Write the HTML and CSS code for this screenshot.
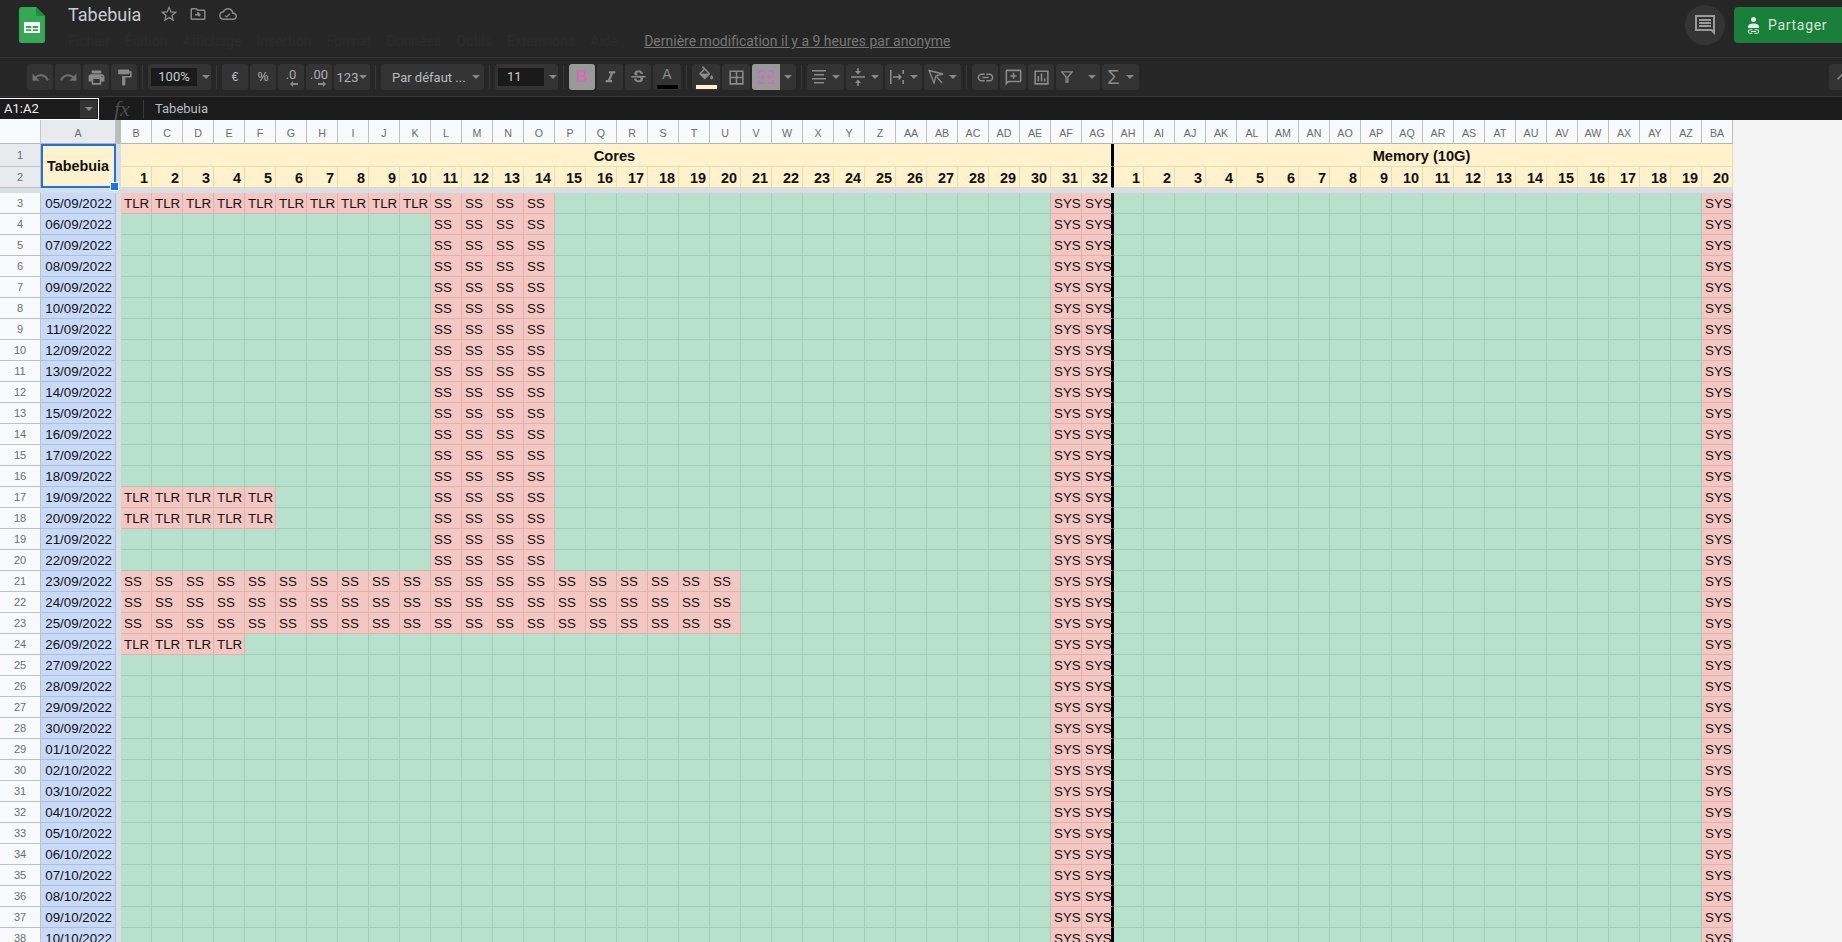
FILE: index.html
```html
<!DOCTYPE html>
<html lang="fr">
<head>
<meta charset="utf-8">
<title>Tabebuia</title>
<link rel="stylesheet" href="styles.css">
</head>
<body>
<header class="appbar">
  <svg class="logo" viewBox="0 0 26 36"><path fill="#34a853" d="M2.500 0H17l9 9v24.500a2.500 2.500 0 0 1-2.500 2.500h-21A2.500 2.500 0 0 1 0 33.500v-31A2.500 2.500 0 0 1 2.500 0z"/><path fill="#228c44" d="M17 0l9 9h-7a2 2 0 0 1-2-2z"/><path fill="#fff" d="M5 15h16v11H5z"/><path fill="#34a853" d="M7 19h5.300v2H7zM13.700 19H19v2h-5.300zM7 22.200h5.300V24H7zM13.700 22.200H19V24h-5.300z"/></svg>
  <div class="docinfo">
    <div class="titlerow">
      <span class="title">Tabebuia</span>
      <svg class="ticon star" viewBox="0 0 24 24"><path d="M22 9.240l-7.190-.62L12 2 9.190 8.630 2 9.240l5.460 4.730L5.820 21 12 17.270 18.180 21l-1.630-7.030L22 9.240zM12 15.400l-3.760 2.270 1-4.280-3.320-2.880 4.380-.38L12 6.100l1.710 4.040 4.380.38-3.320 2.880 1 4.280L12 15.400z"/></svg>
      <svg class="ticon folder" viewBox="0 0 24 24"><path d="M20 6h-8l-2-2H4c-1.100 0-2 .9-2 2v12c0 1.100.9 2 2 2h16c1.100 0 2-.9 2-2V8c0-1.100-.9-2-2-2zm0 12H4V6h5.170l2 2H20v10zm-8-1l1.400-1.400-1.600-1.600H8v-2h3.800l-1.600-1.600L12 9l4 4-4 4z"/></svg>
      <svg class="ticon cloud" viewBox="0 0 24 24"><path d="M19.350 10.040C18.670 6.590 15.640 4 12 4 9.110 4 6.600 5.640 5.350 8.040 2.340 8.360 0 10.910 0 14c0 3.310 2.690 6 6 6h13c2.760 0 5-2.240 5-5 0-2.640-2.050-4.780-4.650-4.960zM19 18H6c-2.210 0-4-1.790-4-4s1.790-4 4-4h.71C7.370 7.690 9.480 6 12 6c3.040 0 5.500 2.460 5.500 5.500v.5H19c1.660 0 3 1.340 3 3s-1.340 3-3 3zm-9.500-3l5-4 1 1-5 5-3-2.500 1-1z"/></svg>
    </div>
    <nav class="menurow">
      <span>Fichier</span><span>Édition</span><span>Affichage</span><span>Insertion</span><span>Format</span><span>Données</span><span>Outils</span><span>Extensions</span><span>Aide</span>
      <a class="lastedit">Dernière modification il y a 9 heures par anonyme</a>
    </nav>
  </div>
  <div class="commentbtn">
    <svg viewBox="0 0 20 20"><path fill-rule="evenodd" d="M0 0h20v20l-4-4H0zM2 2v12h15l1 1V2zM4 4h12v2H4zM4 7h12v2H4zM4 10h12v2H4z"/></svg>
  </div>
  <div class="sharebtn">
    <svg viewBox="0 0 13 17"><circle cx="6.500" cy="2.500" r="2.500"/><path d="M1 9.500C1 7.800 3.500 6.500 6.500 6.500S12 7.800 12 9.500V11H1z"/><path d="M3 12.300h2.500v1H3a1.200 1.200 0 0 0 0 2.400h2.500v1H3a2.200 2.200 0 0 1 0-4.400zM7.500 12.300H10a2.200 2.200 0 0 1 0 4.400H7.500v-1H10a1.200 1.200 0 0 0 0-2.400H7.500zM4 14h5v1H4z"/></svg>
    <span>Partager</span>
  </div>
</header>

<div class="toolbar">
  <div class="btn dim"><svg class="ic" viewBox="0 0 24 24"><path d="M12.500 8c-2.650 0-5.050.99-6.900 2.600L2 7v9h9l-3.620-3.620c1.390-1.160 3.160-1.880 5.120-1.880 3.540 0 6.550 2.310 7.600 5.500l2.370-.78C21.080 11.030 17.150 8 12.500 8z"/></svg></div>
  <div class="btn dim"><svg class="ic" viewBox="0 0 24 24"><path d="M18.400 10.600C16.550 8.990 14.150 8 11.500 8c-4.650 0-8.580 3.030-9.960 7.220L3.900 16c1.050-3.190 4.050-5.500 7.600-5.500 1.950 0 3.730.72 5.120 1.880L13 16h9V7l-3.600 3.600z"/></svg></div>
  <div class="btn"><svg class="ic" viewBox="0 0 24 24"><path d="M19 8H5c-1.660 0-3 1.340-3 3v6h4v4h12v-4h4v-6c0-1.660-1.340-3-3-3zm-3 11H8v-5h8v5zm3-7c-.55 0-1-.45-1-1s.45-1 1-1 1 .45 1 1-.45 1-1 1zm-1-9H6v4h12V3z"/></svg></div>
  <div class="btn"><svg class="ic" viewBox="0 0 24 24"><path d="M18 4V3c0-.55-.45-1-1-1H5c-.55 0-1 .45-1 1v4c0 .55.45 1 1 1h12c.55 0 1-.45 1-1V6h1v4H9v11c0 .55.45 1 1 1h2c.55 0 1-.45 1-1v-9h8V4h-3z"/></svg></div>
  <i class="sep"></i>
  <div class="btn w63"><span class="inbox zoomval">100%</span><i class="caret"></i></div>
  <i class="sep"></i>
  <div class="btn txt">€</div>
  <div class="btn txt">%</div>
  <div class="btn dec"><span>.0</span><svg viewBox="0 0 8 6"><path d="M3 0v2h5v2H3v2L0 3z"/></svg></div>
  <div class="btn dec"><span>.00</span><svg viewBox="0 0 8 6"><path d="M5 0v2H0v2h5v2l3-3z"/></svg></div>
  <div class="btn w36 num"><span>123</span><i class="caret"></i></div>
  <i class="sep"></i>
  <div class="btn w103 fontbtn"><span class="fontname">Par défaut ...</span><i class="caret"></i></div>
  <i class="sep"></i>
  <div class="btn w63"><span class="inbox sizeval">11</span><i class="caret"></i></div>
  <i class="sep"></i>
  <div class="btn on bold">B</div>
  <div class="btn"><svg class="ic" viewBox="0 0 24 24"><path d="M10 4v3h2.210l-3.420 8H6v3h8v-3h-2.210l3.420-8H18V4z"/></svg></div>
  <div class="btn"><svg class="ic" viewBox="0 0 24 24"><path d="M7.240 8.750c-.26-.48-.39-1.030-.39-1.670 0-.61.13-1.160.4-1.670.26-.5.63-.93 1.110-1.290.48-.35 1.050-.63 1.700-.83.66-.19 1.390-.29 2.180-.29.81 0 1.540.11 2.210.34.66.22 1.230.54 1.690.94.47.4.83.88 1.080 1.430.25.55.38 1.150.38 1.810h-3.010c0-.31-.05-.59-.15-.85-.09-.27-.24-.49-.44-.68-.2-.19-.45-.33-.75-.44-.3-.1-.66-.16-1.060-.16-.39 0-.74.04-1.030.13-.29.09-.53.21-.72.36-.19.16-.34.34-.44.55-.1.21-.15.43-.15.66 0 .48.25.88.74 1.210.38.25.77.48 1.410.7H7.390c-.05-.08-.11-.17-.15-.25zM21 12v-2H3v2h9.620c.18.07.4.14.55.2.37.17.66.34.87.51.21.17.35.36.43.57.07.2.11.43.11.69 0 .23-.05.45-.14.66-.09.2-.23.38-.42.53-.19.15-.42.26-.71.35-.29.08-.63.13-1.010.13-.43 0-.83-.04-1.180-.13s-.66-.23-.91-.42c-.25-.19-.45-.44-.59-.75-.14-.31-.25-.76-.25-1.210H6.400c0 .55.08 1.130.24 1.580.16.45.37.85.65 1.210.28.35.6.66.98.92.37.26.78.48 1.220.65.44.17.9.3 1.380.39.48.08.96.13 1.440.13.8 0 1.530-.09 2.180-.28s1.210-.45 1.670-.79c.46-.34.82-.77 1.070-1.270s.38-1.070.38-1.710c0-.6-.1-1.140-.31-1.610-.05-.11-.11-.23-.17-.33H21z"/></svg></div>
  <div class="btn w28 colorbtn"><span class="letter">A</span><i class="swatch black"></i></div>
  <i class="sep"></i>
  <div class="btn w28 colorbtn"><svg class="bucket" viewBox="0 0 22 18"><path d="M16.560 8.940L7.620 0 6.210 1.410l2.380 2.380-5.150 5.150c-.59.59-.59 1.540 0 2.120l5.500 5.500c.29.29.68.44 1.060.44s.77-.15 1.060-.44l5.500-5.500c.59-.58.59-1.530 0-2.120zM5.210 10L10 5.210 14.790 10H5.210zM19 11.500s-2 2.170-2 3.500c0 1.100.9 2 2 2s2-.9 2-2c0-1.330-2-3.500-2-3.500z"/><path d="M5 10h10l-5 5z"/></svg><i class="swatch cream"></i></div>
  <div class="btn w28"><svg class="ic borders" viewBox="0 0 24 24"><path d="M3 3v18h18V3H3zm8 16H5v-6h6v6zm0-8H5V5h6v6zm8 8h-6v-6h6v6zm0-8h-6V5h6v6z"/></svg></div>
  <div class="btn mergegroup"><span class="mergeon"><svg viewBox="0 0 16 14"><path fill="none" stroke="#cf6db9" stroke-width="1.500" d="M.8 4V.8h5M10 .8h5.200V4M.8 10v3.200h5M10 13.200h5.200V10M0 7h6M10 7h6M4 5l2 2-2 2M12 5l-2 2 2 2"/></svg></span><i class="caret"></i></div>
  <i class="sep"></i>
  <div class="btn w37"><svg class="mini" viewBox="0 0 14 14"><path d="M0 0h14v1.600H0zM2 4h10v1.600H2zM0 8h14v1.600H0zM2 12h10v1.600H2z"/></svg><i class="caret"></i></div>
  <div class="btn w37"><svg class="mini tall" viewBox="0 0 14 18"><path d="M0 8.200h14v1.600H0zM6.200 0h1.600v3H10L7 6.500 4 3h2.200zM7 11.500l3 3.500H7.800v3H6.200v-3H4z"/></svg><i class="caret"></i></div>
  <div class="btn w37"><svg class="mini" viewBox="0 0 14 14"><path d="M0 0h1.600v14H0zM12.400 0H14v4h-1.600zM12.400 10H14v4h-1.600zM3 6.200h5.500V3.500L12 7l-3.500 3.500V7.800H3z"/></svg><i class="caret"></i></div>
  <div class="btn w37"><svg class="mini wide" viewBox="0 0 16 16"><path fill="none" stroke="currentColor" stroke-width="1.300" d="M1 1.500l14 3.500-7 1.800-2 7.200zM9 8l5 6"/></svg><i class="caret"></i></div>
  <i class="sep"></i>
  <div class="btn"><svg class="ic" viewBox="0 0 24 24"><path d="M3.900 12c0-1.710 1.390-3.100 3.100-3.100h4V7H7c-2.760 0-5 2.240-5 5s2.240 5 5 5h4v-1.900H7c-1.710 0-3.100-1.390-3.100-3.100zM8 13h8v-2H8v2zm9-6h-4v1.900h4c1.710 0 3.100 1.390 3.100 3.100s-1.390 3.100-3.100 3.100h-4V17h4c2.760 0 5-2.240 5-5s-2.240-5-5-5z"/></svg></div>
  <div class="btn"><svg class="ic" viewBox="0 0 24 24"><path d="M20 2H4c-1.100 0-2 .9-2 2v18l4-4h14c1.100 0 2-.9 2-2V4c0-1.100-.9-2-2-2zm0 14H5.170L4 17.170V4h16v12zM11 14h2v-3h3V9h-3V6h-2v3H8v2h3z"/></svg></div>
  <div class="btn"><svg class="ic" viewBox="0 0 24 24"><path d="M3 3v18h18V3H3zm16 16H5V5h14v14zM9 17H7v-7h2zm4 0h-2V7h2zm4 0h-2v-4h2z"/></svg></div>
  <div class="btn w44"><svg class="mini funnel" viewBox="0 0 14 14"><path fill="none" stroke="currentColor" stroke-width="1.600" d="M1 1h12L8 7v6H6V7z"/></svg><i class="caret"></i></div>
  <div class="btn w37"><span class="sigma">Σ</span><i class="caret"></i></div>
  <div class="btn collapse"><svg viewBox="0 0 24 24"><path d="M12 8l-6 6 1.400 1.400L12 10.800l4.600 4.600L18 14z"/></svg></div>
</div>

<div class="formulabar">
  <div class="namebox"><span>A1:A2</span><div class="namearrow"><i class="caret"></i></div></div>
  <span class="fx">fx</span>
  <i class="fxsep"></i>
  <span class="fxvalue">Tabebuia</span>
</div>

<main class="sheet" id="sheet"></main>
<script src="script.js"></script>
</body>
</html>
```
FILE: styles.css
```css
* { box-sizing: border-box; }
html, body { margin: 0; height: 100%; overflow: hidden; }
body {
  display: flex;
  flex-direction: column;
  background: #f3f3f3;
  font-family: Roboto, "Liberation Sans", sans-serif;
}

/* App bar */
.appbar {
  flex: 0 0 58px;
  display: flex;
  align-items: flex-start;
  background: #262626;
  border-bottom: 1px solid #353535;
  overflow: hidden;
}
.logo { width: 26px; height: 36px; margin: 7px 23px 0 19px; flex: none; }
.docinfo { flex: 1; min-width: 0; }
.titlerow { display: flex; align-items: center; height: 28px; }
.title { font-size: 18px; color: #c9ccd0; width: 91px; }
.ticon { width: 17px; height: 17px; fill: #8a8a8a; margin-right: 13px; flex: none; }
.star { width: 20px; height: 20px; margin-right: 10px; }
.folder { width: 18px; height: 18px; margin-right: 12px; }
.cloud { width: 18px; height: 18px; }
.menurow {
  display: flex;
  align-items: center;
  gap: 15px;
  height: 26px;
  font-size: 14px;
  color: #2b2b2b;
  white-space: nowrap;
}
.lastedit { color: #777; text-decoration: underline; margin-left: 11px; }
.commentbtn {
  width: 40px;
  height: 40px;
  margin: 5px 9px 0 0;
  border-radius: 50%;
  background: #343434;
  display: flex;
  align-items: center;
  justify-content: center;
  flex: none;
}
.commentbtn svg { width: 20px; height: 20px; fill: #999; }
.sharebtn {
  flex: none;
  width: 120px;
  height: 36px;
  margin: 7px -12px 0 0;
  padding-left: 13px;
  border-radius: 4px;
  background: #1a8039;
  color: #d4e6d9;
  display: flex;
  align-items: center;
  gap: 8px;
  font-size: 14px;
  font-weight: 400;
  letter-spacing: .7px;
}
.sharebtn svg { width: 13px; height: 17px; fill: #e4efe7; }

/* Toolbar */
.toolbar {
  flex: 0 0 39px;
  display: flex;
  align-items: center;
  gap: 2px;
  padding: 0 0 0 27px;
  background: #262626;
  border-bottom: 1px solid #353535;
  overflow: hidden;
}
.sep { width: 1px; height: 24px; margin: 0 3px; background: #383838; flex: none; }
.btn {
  flex: none;
  width: 26px;
  height: 26px;
  border-radius: 3px;
  background: #333;
  color: #8a8a8a;
  fill: #8a8a8a;
  display: flex;
  align-items: center;
  justify-content: center;
  position: relative;
  font-size: 13px;
}
.ic { width: 19px; height: 19px; }
.borders { width: 19px; height: 19px; }
.dim { fill: #707070; }
.w28 { width: 28px; }
.w36 { width: 36px; }
.w37 { width: 37px; }
.w44 { width: 44px; }
.w63 { width: 63px; }
.w103 { width: 103px; }
.caret {
  display: block;
  width: 0;
  height: 0;
  border: 4px solid transparent;
  border-top: 4px solid #888;
  border-bottom: 0;
  flex: none;
}
.inbox {
  display: block;
  width: 46px;
  height: 18px;
  line-height: 18px;
  background: #1a1a1a;
  font-size: 13px;
  color: #c9ccd0;
  text-align: center;
  margin: 0 5px 0 2px;
}
.sizeval { text-align: left; padding-left: 9px; }
.txt { font-size: 12px; color: #b8bcc0; font-family: "Liberation Sans", sans-serif; }
.dec {
  display: block;
  color: #8a8a8a;
  font-size: 13px;
  line-height: 14px;
  padding-top: 4px;
  text-align: center;
}
.dec span { display: block; color: #a9adb1; }
.dec svg { position: absolute; width: 8px; height: 6px; right: 6px; bottom: 3px; }
.num span { color: #b0b4b8; margin-right: 1px; font-size: 13px; }
.fontbtn { justify-content: space-between; padding: 0 4px 0 11px; }
.fontname { color: #b8bcc0; font-size: 13px; white-space: nowrap; }
.on { background: #999; }
.bold { color: #cf6db9; font-family: "Liberation Sans", sans-serif; font-weight: 700; font-size: 17px; }
.colorbtn { display: block; text-align: center; }
.letter {
  display: block;
  font-family: "Liberation Sans", sans-serif;
  font-size: 14px;
  line-height: 20px;
  color: #8a8a8a;
}
.swatch { position: absolute; left: 4px; right: 3px; bottom: 1px; height: 4px; display: block; }
.black { background: #000; }
.cream { background: #fff2cc; }
.bucket { display: block; width: 17px; height: 14px; margin: 2px 0 0 5px; }
.mergegroup { width: 44px; justify-content: flex-start; }
.mergeon {
  width: 28px;
  height: 26px;
  background: #999;
  border-radius: 3px 0 0 3px;
  display: flex;
  align-items: center;
  justify-content: center;
  margin-right: 4px;
}
.mergeon svg { width: 16px; height: 14px; }
.mini { width: 14px; height: 14px; margin-right: 6px; color: #8a8a8a; flex: none; }
.tall { height: 18px; }
.wide { width: 16px; height: 16px; margin-right: 5px; }
.funnel { width: 12px; height: 12px; margin-right: 15px; }
.sigma { font-size: 20px; color: #8a8a8a; margin-right: 6px; line-height: 20px; font-family: "Liberation Sans", sans-serif; }
.collapse { margin-left: auto; margin-right: -13px; justify-content: flex-start; }
.collapse svg { width: 20px; height: 20px; margin-left: 3px; }

/* Formula bar */
.formulabar {
  flex: 0 0 23px;
  display: flex;
  align-items: center;
  background: #1b1b1b;
  color: #b8bcc0;
  font-size: 13px;
}
.namebox {
  width: 100px;
  height: 22px;
  margin-left: -1px;
  border: 1px solid #fff;
  display: flex;
  align-items: center;
  justify-content: space-between;
  padding-left: 4px;
  color: #eee;
  background: #1b1b1b;
  flex: none;
}
.namearrow {
  width: 17px;
  height: 18px;
  margin-right: 1px;
  background: #333;
  display: flex;
  align-items: center;
  justify-content: center;
}
.fx {
  font-family: "Liberation Serif", serif;
  font-style: italic;
  font-size: 22px;
  color: #4d4d4d;
  width: 29px;
  margin-left: 15px;
  line-height: 20px;
}
.fxsep { width: 1px; height: 18px; background: #383838; }
.fxvalue { margin-left: 11px; }

/* Sheet */
.sheet {
  flex: 1;
  min-height: 0;
  overflow: hidden;
  display: grid;
  grid-template-columns: 41px 75px 5px repeat(52, 31px);
  grid-template-rows: 24px 23px 21px 5px;
  grid-auto-rows: 21px;
  justify-content: start;
  align-content: start;
  font-family: "Liberation Sans", Arial, sans-serif;
  font-size: 13.33px;
  color: #111;
  background: #f3f3f3;
}
.corner { background: #f8f9fa; border-right: 1px solid #c4c7c9; border-bottom: 1px solid #b8b8b8; }
.colhead, .rowhead {
  display: flex;
  align-items: center;
  justify-content: center;
  color: #686c70;
  font-size: 10.67px;
  background: #f8f9fa;
  border-right: 1px solid #c0c0c0;
  border-bottom: 1px solid #c0c0c0;
}
.colhead { border-bottom: 1px solid #b4b4b4; padding-top: 3px; }
.colhead.active, .rowhead.active { background: #e8eaed; }
.rowhead { font-size: 11px; color: #6e6e6e; }
.vbar { background: #d9dde6; }
.vbar.top { background: #bdbdbd; }
.hbar { grid-column: 1 / -1; background: #d9dde6; }
.cell {
  line-height: 22px;
  padding: 0 0 0 3px;
  white-space: nowrap;
  overflow: hidden;
  border-right: 1px solid #a3cbb6;
  border-bottom: 1px solid #a3cbb6;
  background: #b7e1cd;
}
.cell.red { background: #f4c7c3; border-color: #dbb4b0; }
.cell.date {
  background: #c9daf8;
  border-color: #aebfdc;
  text-align: right;
  padding: 0 3px 0 0;
}
.cell.head {
  background: #fff2cc;
  border-color: #e8dcb4;
  font-weight: 700;
  font-size: 14.4px;
  padding: 0 3px 0 0;
}
.cell.num { text-align: right; line-height: 23px; }
.cell.span { text-align: center; line-height: 24px; font-size: 14.67px; }
.cell.endcore { border-right: 2px solid #000; }
.cell.startmem { border-left: 1px solid #000; }
.cell.head.selected {
  position: relative;
  overflow: visible;
  display: flex;
  align-items: center;
  justify-content: center;
  padding: 0;
}
.selected::before {
  content: "";
  position: absolute;
  inset: 0 -1px -1px 0;
  border: 2px solid #1a73e8;
}
.selected::after {
  content: "";
  position: absolute;
  right: -4px;
  bottom: -4px;
  width: 7px;
  height: 7px;
  background: #1a73e8;
  border: 1px solid #fff;
  z-index: 2;
}
```
FILE: script.js
```js
(function () {
  var sheet = document.getElementById('sheet');
  var COLS = 52;

  function colName(i) {
    var a = 'ABCDEFGHIJKLMNOPQRSTUVWXYZ';
    return i < 26 ? a[i] : a[Math.floor(i / 26) - 1] + a[i % 26];
  }
  function add(cls, text, style) {
    var d = document.createElement('div');
    d.className = cls;
    if (text) d.textContent = text;
    if (style) d.setAttribute('style', style);
    sheet.appendChild(d);
    return d;
  }

  // Column letters
  add('corner');
  add('colhead active', 'A');
  add('vbar top');
  for (var c = 1; c <= COLS; c++) add('colhead', colName(c));

  // Frozen rows 1 and 2
  add('rowhead active', '1');
  add('cell head selected', 'Tabebuia', 'grid-row: span 2');
  add('vbar', '', 'grid-row: span 2');
  add('cell head span endcore', 'Cores', 'grid-column: span 32');
  add('cell head span startmem', 'Memory (10G)', 'grid-column: span 20');
  add('rowhead active', '2');
  for (c = 1; c <= COLS; c++) {
    var n = c <= 32 ? c : c - 32;
    var cls = 'cell head num';
    if (c === 32) cls += ' endcore';
    if (c === 33) cls += ' startmem';
    add(cls, String(n));
  }
  add('hbar');

  // Who holds each core on a given sheet row
  function value(row, c) {
    if (c === 31 || c === 32 || c === 52) return 'SYS';
    if (row === 3 && c <= 10) return 'TLR';
    if ((row === 17 || row === 18) && c <= 5) return 'TLR';
    if (row === 24 && c <= 4) return 'TLR';
    if (row >= 21 && row <= 23 && c <= 20) return 'SS';
    if (row <= 23 && c >= 11 && c <= 14) return 'SS';
    return '';
  }
  function pad(v) { return (v < 10 ? '0' : '') + v; }

  for (var row = 3; row <= 38; row++) {
    var date = new Date(2022, 8, 5 + row - 3);
    add('rowhead', String(row));
    add('cell date', pad(date.getDate()) + '/' + pad(date.getMonth() + 1) + '/' + date.getFullYear());
    add('vbar');
    for (c = 1; c <= COLS; c++) {
      var v = value(row, c);
      var k = 'cell' + (v ? ' red' : '');
      if (c === 32) k += ' endcore';
      if (c === 33) k += ' startmem';
      add(k, v);
    }
  }
})();
```
